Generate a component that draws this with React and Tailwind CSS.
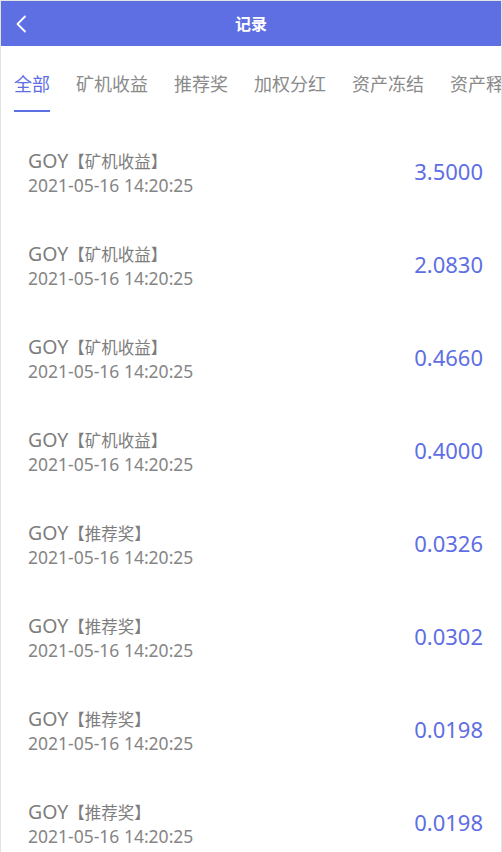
import React from 'react'

const tabs = ['全部', '矿机收益', '推荐奖', '加权分红', '资产冻结', '资产释放']

const records = [
    { type: '矿机收益', amount: '3.5000' },
    { type: '矿机收益', amount: '2.0830' },
    { type: '矿机收益', amount: '0.4660' },
    { type: '矿机收益', amount: '0.4000' },
    { type: '推荐奖', amount: '0.0326' },
    { type: '推荐奖', amount: '0.0302' },
    { type: '推荐奖', amount: '0.0198' },
    { type: '推荐奖', amount: '0.0198' },
]

export default function App() {
    return (
        <div
            className="min-h-screen bg-white border-t border-l border-r border-[#e3e3e3]"
            style={{ fontFamily: '"Noto Sans", "Noto Sans CJK SC", sans-serif' }}
        >
            {/* header */}
            <div className="relative h-[45px] bg-[#5e6ee3] flex items-center justify-center">
                <button className="absolute left-[12px] top-[13px] w-[16px] h-[20px] flex items-center justify-center">
                    <svg width="12" height="18" viewBox="0 0 12 18" fill="none">
                        <path d="M10 1.5 L2.5 9 L10 16.5" stroke="white" strokeWidth="1.8" strokeLinecap="round" strokeLinejoin="round" />
                    </svg>
                </button>
                <h1 className="text-white text-[16px] font-bold">记录</h1>
            </div>

            <div className="flex overflow-hidden whitespace-nowrap pt-[26px]">
                {tabs.map((t, i) => (
                    <div key={t} className="px-[13px] shrink-0 flex flex-col">
                        <span className={`text-[18px] leading-[24px] ${i === 0 ? 'text-[#5e6ee3]' : 'text-[#8a8a8a]'}`}>{t}</span>
                        <span className={`mt-[14px] h-[2px] ${i === 0 ? 'bg-[#5e6ee3]' : 'bg-transparent'}`}></span>
                    </div>
                ))}
            </div>

            {/* list */}
            <div className="pt-[13px]">
                {records.map((r, i) => (
                    <div key={i} className="h-[93px] flex items-center justify-between pl-[27px] pr-[18px]">
                        <div className="flex flex-col pt-[2px]">
                            <span className="text-[19.5px] leading-[25px] text-[#7d7d7d]">GOY<span className="text-[16.5px]">【{r.type}】</span></span>
                            <span className="text-[17.5px] leading-[23px] text-[#858585]">2021-05-16 14:20:25</span>
                        </div>
                        <span className="text-[22px] text-[#5e6ee3]">{r.amount}</span>
                    </div>
                ))}
            </div>
        </div>
    )
}
